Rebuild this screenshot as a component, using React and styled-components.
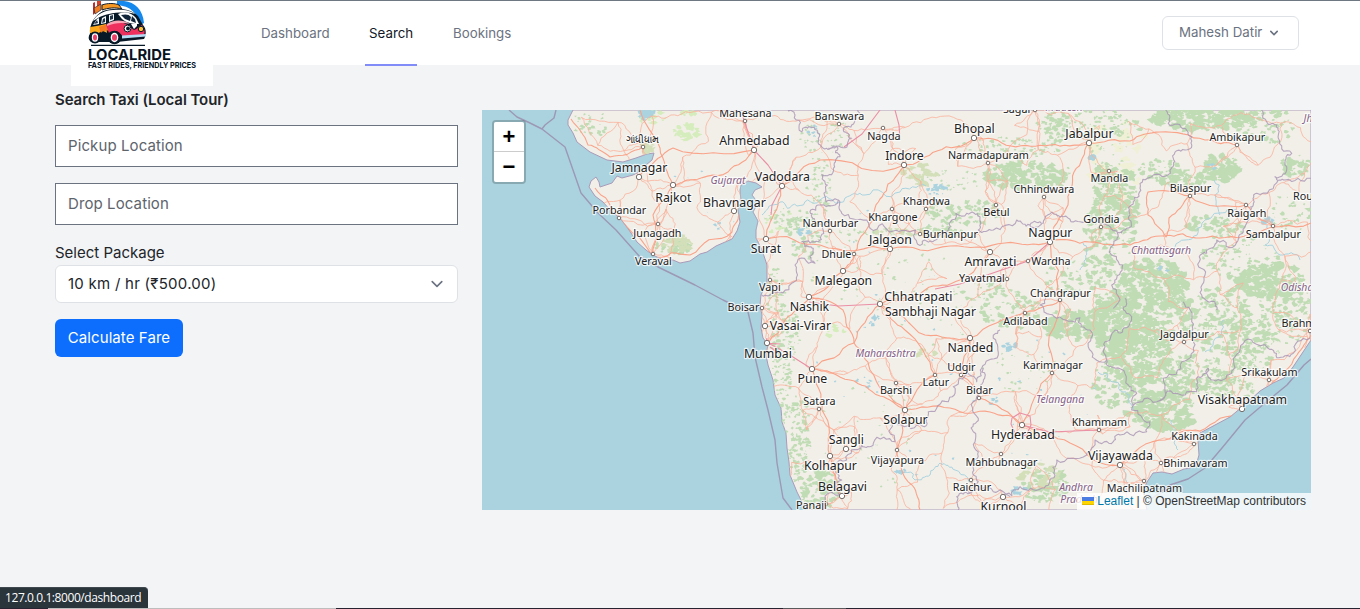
import React from 'react';
import styled, { createGlobalStyle } from 'styled-components';

const Global = createGlobalStyle`
  * { box-sizing: border-box; }
  html, body { margin: 0; height: 100%; overflow: hidden; }
  body { background: #f3f4f6; font-family: Inter, "Liberation Sans", sans-serif; color: #212529; }
`;

const Page = styled.div`
  height: 609px;
  overflow: hidden;
  background: #f3f4f6;
  border-top: 1px solid #6e7883;
`;
const Header = styled.header`
  height: 65px;
  border-bottom: 1px solid #f3f4f6;
  background: #fff;
  display: flex;
  align-items: flex-start;
  padding: 0 61px 0 71px;
`;
const LogoLink = styled.a`
  width: 142px;
  height: 85px;
  flex: none;
  background: #fff;
  svg { display: block; }
`;
const Nav = styled.nav`
  display: flex;
  gap: 32px;
  margin-left: 44px;
  height: 65px;
`;
const NavItem = styled.a`
  height: 65px;
  padding: 0 4px;
  display: flex;
  align-items: center;
  width: ${p => p.$w}px;
  font-size: 13.3px;
  font-weight: 400;
  letter-spacing: ${p => p.$ls || 0}px;
  white-space: nowrap;
  color: ${p => (p.$active ? '#111827' : '#6b7280')};
  border-bottom: 2px solid ${p => (p.$active ? '#818cf8' : 'transparent')};
`;
const UserButton = styled.button`
  margin: 15px 0 0 auto;
  width: 137px;
  height: 34px;
  padding: 0 0 2px 16px;
  display: flex;
  align-items: center;
  gap: 4px;
  border: 1px solid #dee2e6;
  border-radius: 6px;
  background: #fff;
  color: #6b7280;
  font: 400 13.3px Inter, sans-serif;
  white-space: nowrap;
  svg { margin-top: 2px; }
`;
const Main = styled.main`
  display: flex;
  gap: 24px;
  padding: 0 49px 0 55px;
`;
const Form = styled.form`
  width: 403px;
  padding-top: 22px;
  display: flex;
  flex-direction: column;
  align-items: stretch;
`;
const Title = styled.h1`
  margin: 0 0 13px;
  font-size: 15px;
  line-height: 24px;
  font-weight: 600;
  letter-spacing: -0.08px;
`;
const Field = styled.input`
  height: 42px;
  margin: 0 0 16px;
  padding: 0 12px 2px;
  border: 1px solid #6b7280;
  border-radius: 0;
  background: #fff;
  font: 400 15px Inter, sans-serif;
  letter-spacing: 0.1px;
  &::placeholder { color: #5d646c; opacity: 1; }
`;
const Label = styled.label`
  font-size: 15px;
  line-height: 24px;
`;
const Select = styled.div`
  height: 38px;
  padding: 0 12px 2px;
  display: flex;
  align-items: center;
  justify-content: space-between;
  border: 1px solid #dee2e6;
  border-radius: 6px;
  background: #fff;
  font-size: 15px;
  letter-spacing: 0.26px;
  svg { margin-top: 2px; }
`;
const Submit = styled.button`
  margin-top: 16px;
  width: 128px;
  height: 38px;
  padding: 0 0 2px;
  border: 0;
  border-radius: 6px;
  background: #0d6efd;
  color: #fff;
  font: 400 15px Inter, sans-serif;
  letter-spacing: 0.08px;
  white-space: nowrap;
`;
const MapPane = styled.section`
  position: relative;
  width: 829px;
  height: 400px;
  margin-top: 44px;
  overflow: hidden;
  background: #aad3df;
  svg { display: block; }
`;
const Zoom = styled.div`
  position: absolute;
  left: 10px;
  top: 10px;
  width: 34px;
  border: 2px solid rgba(0, 0, 0, 0.2);
  border-radius: 4px;
  background-clip: padding-box;
`;
const ZoomButton = styled.button`
  display: block;
  width: 30px;
  height: 30px;
  padding: 0;
  border: 0;
  border-bottom: ${p => (p.$top ? '1px solid #ccc' : '0')};
  border-radius: ${p => (p.$top ? '2px 2px 0 0' : '0 0 2px 2px')};
  background: #fff;
  color: #000;
  font: bold 22px/30px "Liberation Sans", sans-serif;
`;
const Attribution = styled.div`
  position: absolute;
  right: 0;
  bottom: 0;
  height: 17px;
  padding: 0 5px 2px;
  display: flex;
  align-items: center;
  background: rgba(255, 255, 255, 0.8);
  color: #333;
  font: 12px "Liberation Sans", sans-serif;
  white-space: pre;
  a { color: #0078a8; }
  svg { margin: 1px 3px 0 0; }
`;
const Status = styled.div`
  position: fixed;
  left: 0;
  bottom: 1px;
  width: 148px;
  height: 21px;
  padding-left: 5px;
  border-radius: 0 4px 0 0;
  border-top: 1px solid #3f484f;
  background: #2a343b;
  color: #fff;
  font: 12px/20px "Open Sans", sans-serif;
  letter-spacing: -0.42px;
  white-space: nowrap;
`;
const Edge = styled.div`
  position: fixed;
  left: 0;
  right: 0;
  bottom: 0;
  height: 1px;
  background: linear-gradient(90deg, #272330 48px, #bdbdbd 48px 336px, #272330 336px 783px, #59595c 783px 846px, #272330 846px);
`;

/* ---------- map data: [name, label x, label baseline, dot x, dot y, size] ---------- */
const B = 12.3, S = 10.75;
const cities = [
  ['Mahesana', 745, 117, 745, 121, S], ['Ahmedabad', 754, 145, 754, 150, B], ['ગાંધીધામ', 642, 143, 643, 147, 10],
  ['Jamnagar', 639, 172, 639, 177, B], ['Rajkot', 673, 202, 673, 185, B], ['Bhavnagar', 734, 207, 734, 211, B],
  ['Porbandar', 619, 214, 619, 218, S], ['Junagadh', 657, 237, 658, 224, S], ['Veraval', 653, 265, 653, 254, S],
  ['Vadodara', 782, 181, 782, 186, B], ['Surat', 765.5, 253, 766, 239, B], ['Vapi', 769.5, 291, 770, 280, S],
  ['Boisar', 743, 311, 762, 308, S], ['Nashik', 809, 311, 809, 297, B], ['Vasai-Virar', 800, 330, 765, 326, B],
  ['Mumbai', 767.5, 358, 767, 343, B], ['Pune', 812, 383, 812, 369, B], ['Satara', 819, 405, 819, 409, S],
  ['Sangli', 846, 444, 846, 449, B], ['Kolhapur', 830, 470, 830, 456, B], ['Belagavi', 842, 491, 842, 496, B],
  ['Panaji', 811, 509, 826, 504, S], ['Banswara', 839, 120, 839, 124, S], ['Nagda', 883.5, 140, 883, 128, S],
  ['Indore', 904, 160, 904, 165, B], ['Bhopal', 974, 133, 974, 138, B], ['Narmadapuram', 988, 159, 988, 163, S],
  ['Khandwa', 926, 205, 926, 209, S], ['Khargone', 892.5, 221, 892, 209, S], ['Betul', 996, 216, 996, 205, S],
  ['Nandurbar', 830, 227, 830, 231, S], ['Dhule', 836, 258, 854, 254, S], ['Jalgaon', 890, 244, 890, 249, B],
  ['Burhanpur', 950, 238, 920, 234, S], ['Malegaon', 843, 285, 843, 271, B], ['Amravati', 990, 266, 990, 252, B],
  ['Yavatmal', 981.5, 282, 1007, 279, S], ['Wardha', 1050.5, 265, 1028, 261, S], ['Chhatrapati', 918, 301, 880, 304, B],
  ['Sambhaji Nagar', 930, 316, null, null, 12.1], ['Nagpur', 1050, 237, 1050, 242, B], ['Chhindwara', 1043.5, 193, 1044, 197, S],
  ['Jabalpur', 1089, 138, 1089, 143, B], ['Mandla', 1109, 182, 1109, 171, S], ['Gondia', 1101, 223, 1101, 227, S],
  ['Bilaspur', 1190, 192, 1190, 196, S], ['Ambikapur', 1237, 141, 1237, 145, S], ['Raigarh', 1246.5, 217, 1246, 205, S],
  ['Sambalpur', 1273, 238, 1273, 226, S], ['Rou', 1302.500, 200, null, null, S], ['Chandrapur', 1060, 297, 1060, 300, S],
  ['Adilabad', 1025, 325, 1025, 313, S], ['Jagdalpur', 1184, 338, 1184, 342, S], ['Brahm', 1298, 327, 1310, 331, S],
  ['Karimnagar', 1052.5, 369, 1052, 373, S], ['Srikakulam', 1269, 376, 1269, 380, S], ['Visakhapatnam', 1242, 404, 1242, 409, B],
  ['Khammam', 1099, 426, 1099, 430, S], ['Kakinada', 1194, 440, 1194, 444, S], ['Hyderabad', 1022.5, 439, 1022, 425, B],
  ['Vijayawada', 1120, 460, 1120, 465, B], ['Bhimavaram', 1195, 467, 1161, 463, S], ['Machilipatnam', 1144, 492, 1144, 481, S],
  ['Mahbubnagar', 1001, 466, 1001, 454, S], ['Raichur', 971.5, 491, 971, 480, S], ['Kurnool', 1003, 511, 1003, 497, B],
  ['Nanded', 970, 352, 970, 338, B], ['Udgir', 961, 371, 961, 375, S], ['Latur', 935.5, 386, 935, 375, S],
  ['Barshi', 895.5, 394, 896, 383, S], ['Bidar', 979, 394, 979, 398, S], ['Solapur', 905, 424, 905, 410, B],
  ['Vijayapura', 897, 464, 897, 450, S], ['Sagar', 1017, 113, 1035, 110, S],
];
const states = [
  ['Gujarat', 728, 184], ['Chhattisgarh', 1161, 254], ['Maharashtra', 885.5, 357], ['Telangana', 1060, 403],
  ['Andhra', 1076, 491], ['Pradesh', 1079, 503], ['Odisha', 1297, 291], ['Jh', 1308, 122], ['Pradesh', 1064, 111],
];

const LAND = 'M573 110L568 120 568 125 573 133 577 142 590 152 607 160 623 162 636 158 647 154 654 153 652 160 646 165 641 171 633 175 622 178 617 176 612 183 600 187 599 182 596 177 591 181 589 187 595 196 603 202 611 211 620 218 629 230 637 242 646 250 653 255 665 261 673 260 680 263 690 261 700 254 707 252 716 246 732 239 737 231 740 222 738 210 741 202 740 190 741 185 748 181 756 183 762 187 755 190 752 195 758 203 753 212 758 221 756 230 756 238 762 250 767 265 767 282 761 295 760 305 762 315 761 328 763 338 768 345 766 355 768 365 773 380 775 395 781 408 782 422 786 433 787 448 789 462 790 475 797 492 806 510H1147L1143 492 1147 482 1153 473 1162 472 1172 474 1184 469 1190 468 1197 462 1199 455 1198 440 1200 433 1215 425 1230 417 1248 402 1260 391 1273 383 1284 378 1293 367 1303 352 1311 340V110Z';
/* the narrow gulf between the two peninsulas */
const GULF = 'M740 186L745 184 751 185 755 188 762 187 755 190 752 195 758 203 753 212 758 221 756 230 756 238 762 250H735L738 228 741 220 738 210 741 202Z';

const outline = (ox, oy, pts) => 'M' + pts.map(([x, y]) => `${(ox + x / 3).toFixed(1)} ${(oy + y / 3).toFixed(1)}`).join('L');
const borders = [
  outline(750, 105, [[110, 12], [135, 30], [155, 80], [180, 65], [205, 100], [230, 130], [260, 125], [270, 155], [250, 190], [215, 208], [232, 240], [228, 290], [265, 285], [275, 325], [350, 345], [360, 370], [430, 378], [497, 375], [503, 418], [548, 410], [590, 380], [600, 352], [650, 325], [690, 335], [685, 375], [730, 375], [800, 345], [840, 360], [875, 358]]),
  outline(750, 105, [[330, 0], [315, 45], [280, 75], [305, 100], [285, 128], [235, 130]]),
  outline(750, 105, [[265, 285], [205, 300], [180, 320], [195, 350], [220, 375], [205, 410], [155, 410], [165, 425], [190, 430], [195, 475], [135, 480], [125, 535], [60, 570], [35, 570]]),
  outline(1030, 105, [[0, 360], [40, 355], [80, 328], [100, 335], [150, 350], [210, 355], [240, 365], [262, 385], [285, 375], [300, 330], [310, 290], [330, 250], [365, 215], [420, 195], [430, 160], [465, 135], [485, 95], [465, 70], [415, 55], [405, 10]]),
  outline(1030, 105, [[262, 385], [250, 420], [265, 470], [260, 520], [245, 540], [250, 610]]),
  outline(1030, 105, [[690, 10], [700, 40], [740, 60], [745, 100], [785, 145], [770, 185], [735, 215], [765, 225], [843, 220]]),
  outline(1030, 105, [[745, 225], [680, 265], [670, 300], [655, 330], [640, 380], [620, 412], [560, 405], [530, 445], [508, 455], [525, 510], [515, 570], [555, 590], [560, 615]]),
  outline(1000, 305, [[140, -45], [120, 0], [170, 40], [240, 38], [270, 75], [275, 140], [320, 165], [345, 190], [385, 240], [410, 265], [395, 315], [450, 350], [440, 380], [360, 390], [340, 410], [285, 405], [260, 450], [170, 465], [165, 510], [125, 550], [60, 545], [0, 580]]),
  outline(1000, 305, [[320, 165], [315, 110], [345, 75], [385, 65], [395, 35], [370, 10], [375, -20]]),
  outline(1000, 305, [[550, -10], [575, 50], [580, 110], [545, 170], [490, 220], [470, 290], [400, 300]]),
  outline(1000, 305, [[470, 290], [530, 265], [590, 260], [595, 215], [625, 190], [640, 225], [695, 205], [705, 155], [755, 105], [800, 125], [830, 158], [880, 145], [930, 100]]),
  outline(700, 305, [[900, 75], [880, 90], [895, 150], [845, 190], [830, 230], [805, 205], [760, 245], [745, 290], [685, 320], [680, 360], [650, 360], [580, 345], [585, 410], [520, 415], [485, 420], [440, 465], [400, 490], [425, 525], [420, 570], [350, 610]]),
  outline(700, 305, [[850, 190], [850, 230], [830, 275], [835, 340], [820, 380], [835, 440], [820, 490], [835, 530], [810, 565], [770, 575], [775, 615]]),
  outline(700, 305, [[810, 565], [880, 560], [930, 575]]),
];
const seaLines = [
  'M509 110L517 117 530 123 542 129 565 147 573 170 581 193 598 213 616 230 640 257 658 267 695 285 723 300 748 312 753 333 755 357 762 387 768 410 775 440 777 463 783 498 792 510',
  'M542 129L545 125 554 118 556 110',
  'M1311 359L1304 365 1287 385 1265 403 1245 420 1222 448 1205 468 1188 479 1170 485 1150 500',
];

/* ---------- procedural terrain ---------- */
function rng(seed) {
  let s = seed;
  return () => {
    s = (s * 1664525 + 1013904223) >>> 0;
    return s / 4294967296;
  };
}
/* forest clusters: centre x, centre y, radius x, radius y, patch count, patch size */
const forests = [
  [1030, 175, 42, 13, 70, 5], [965, 212, 38, 11, 40, 4], [940, 232, 20, 6, 18, 4], [1010, 148, 48, 10, 40, 2.5],
  [1090, 125, 50, 14, 45, 3], [1055, 125, 10, 20, 25, 3], [1108, 195, 14, 32, 75, 4], [1128, 210, 9, 40, 45, 4],
  [1100, 250, 15, 45, 60, 4], [1200, 118, 45, 12, 85, 5], [1265, 125, 28, 18, 45, 3.5], [1222, 168, 16, 12, 50, 5],
  [1180, 178, 28, 8, 40, 4], [1160, 168, 20, 8, 20, 3], [1215, 225, 26, 8, 28, 4], [1295, 165, 14, 10, 22, 4],
  [1290, 215, 20, 20, 25, 2.5], [1270, 280, 30, 16, 80, 5], [1240, 255, 36, 22, 45, 3], [1150, 285, 34, 24, 110, 5],
  [1115, 325, 20, 32, 130, 5], [1140, 350, 28, 32, 130, 5], [1170, 315, 26, 25, 65, 4], [1195, 375, 38, 18, 90, 4],
  [1165, 410, 28, 20, 90, 5], [1110, 385, 16, 22, 35, 4], [1075, 325, 30, 14, 60, 5], [1135, 400, 12, 20, 24, 4],
  [1220, 320, 30, 32, 90, 3.5], [1250, 345, 28, 24, 75, 3.5], [1285, 310, 26, 32, 65, 3.5], [1230, 390, 26, 12, 40, 3],
  [780, 390, 11, 45, 65, 2.5], [800, 440, 10, 45, 55, 3], [820, 490, 18, 18, 45, 4], [785, 335, 14, 28, 45, 2.5],
  [775, 295, 9, 25, 25, 2.5], [803, 238, 16, 22, 32, 3], [790, 218, 24, 10, 30, 2], [825, 135, 24, 18, 26, 2],
  [820, 185, 12, 30, 28, 2.2], [675, 246, 17, 8, 18, 4], [590, 125, 18, 13, 15, 2.5], [1010, 310, 28, 18, 32, 3.5],
  [985, 290, 28, 10, 22, 3], [1020, 370, 35, 20, 18, 2], [1045, 485, 22, 16, 45, 4], [1110, 140, 22, 30, 30, 2],
  [900, 232, 60, 4, 28, 2], [955, 180, 35, 10, 22, 2], [870, 265, 70, 35, 28, 2], [930, 310, 60, 35, 20, 1.8],
  [860, 440, 60, 50, 24, 1.8], [1070, 280, 24, 18, 24, 3],
];
function blob(r, x, y, size) {
  const n = 8;
  let d = '';
  for (let i = 0; i < n; i++) {
    const a = (i / n) * Math.PI * 2;
    const k = size * (0.3 + r() * 0.9);
    d += `${i ? 'L' : 'M'}${(x + Math.cos(a) * k * 1.25).toFixed(1)} ${(y + Math.sin(a) * k * 0.9).toFixed(1)}`;
  }
  return d + 'Z';
}
function scatter(seed, clusters, density = 1, scale = 1) {
  const r = rng(seed);
  let d = '';
  clusters.forEach(([cx, cy, rx, ry, n, size]) => {
    for (let i = 0; i < n * density; i++) {
      const a = r() * Math.PI * 2;
      const q = Math.sqrt(r()) * 1.08;
      d += blob(r, cx + Math.cos(a) * rx * q, cy + Math.sin(a) * ry * q, size * scale * (0.3 + r() * 0.8));
    }
  });
  return d;
}
function wiggle(r, x1, y1, x2, y2, amount) {
  let pts = [[x1, y1], [x2, y2]];
  for (let k = 0; k < 3; k++) {
    const next = [pts[0]];
    for (let i = 1; i < pts.length; i++) {
      const [ax, ay] = pts[i - 1];
      const [bx, by] = pts[i];
      const o = (r() - 0.5) * amount;
      next.push([(ax + bx) / 2 - (by - ay) * o, (ay + by) / 2 + (bx - ax) * o], pts[i]);
    }
    pts = next;
  }
  return pts;
}
const toPath = pts => 'M' + pts.map(p => `${p[0].toFixed(1)} ${p[1].toFixed(1)}`).join('L');

function network() {
  const r = rng(77);
  const nodes = cities.filter(c => c[3] !== null).map(c => [c[3], c[4]]);
  const hubs = nodes.length;
  for (let y = 112; y < 515; y += 26) {
    for (let x = 575; x < 1315; x += 30) nodes.push([x + r() * 24, y + r() * 20]);
  }
  const inSea = (x, y) => (x < 755 && y > 262) || (x < 785 && y > 400) || (x < 640 && y > 240) || (x > 1215 && y > 430) || (x > 741 && x < 756 && y > 185 && y < 240) || (y > 162 && y < 185 && x < 636);
  const done = new Set();
  let d = '';
  nodes.forEach(([x, y], i) => {
    if (inSea(x, y)) return;
    const near = nodes
      .map((p, j) => [j, Math.hypot(p[0] - x, p[1] - y)])
      .filter(([j, dist]) => j !== i && dist > 6 && !inSea(nodes[j][0], nodes[j][1]))
      .sort((a, b) => a[1] - b[1])
      .slice(0, i < hubs ? 5 : 2);
    near.forEach(([j]) => {
      const key = Math.min(i, j) + '-' + Math.max(i, j);
      if (done.has(key)) return;
      done.add(key);
      d += toPath(wiggle(r, x, y, nodes[j][0], nodes[j][1], 0.32));
    });
  });
  return d;
}
function jagged(seed, d, amount = 0.6) {
  const r = rng(seed);
  const pts = d.slice(1).replace(/L/g, ' ').split(' ').map(Number);
  let out = [[pts[0], pts[1]]];
  for (let i = 2; i < pts.length; i += 2) {
    out = out.concat(wiggle(r, pts[i - 2], pts[i - 1], pts[i], pts[i + 1], amount).slice(1));
  }
  return toPath(out);
}
const forestPath = scatter(5, forests, 1.9, 0.88);
const meadowPath = scatter(9, [[686, 132, 11, 8, 35, 4], [652, 118, 13, 8, 12, 4], [780, 222, 14, 12, 10, 3], [835, 331, 9, 6, 8, 3], [690, 113, 10, 2, 10, 3]]);
const scrubPath = scatter(12, [[920, 175, 15, 9, 32, 4], [895, 232, 18, 3, 15, 3], [678, 243, 14, 7, 26, 4], [1040, 475, 18, 11, 32, 4], [648, 147, 6, 4, 10, 4], [925, 353, 10, 4, 12, 3]]);
const paleGreen = scatter(21, [[1120, 155, 28, 38, 28, 7]]);
const clearings = scatter(31, [[1150, 320, 40, 55, 75, 1.5], [1230, 340, 50, 40, 80, 1.8], [1200, 380, 35, 20, 40, 1.5], [1110, 250, 20, 65, 40, 1.4], [1200, 125, 50, 18, 24, 1.3]]);
const waterPath = scatter(14, [
  [937, 190, 10, 5, 16, 3], [1091, 157, 3, 4, 6, 3], [1212, 167, 4, 3, 5, 3], [1267, 220, 6, 3, 12, 3], [874, 320, 6, 6, 7, 3],
  [864, 383, 8, 6, 9, 2], [901, 472, 6, 3, 8, 3], [806, 233, 6, 5, 8, 3], [1009, 347, 7, 4, 9, 3], [814, 131, 5, 8, 9, 2],
  [994, 402, 5, 6, 8, 2], [1020, 490, 7, 4, 8, 3], [719, 226, 4, 3, 5, 2], [1165, 269, 7, 2, 6, 2], [646, 115, 10, 4, 14, 4],
  [880, 260, 100, 55, 14, 1.5], [900, 400, 95, 85, 20, 1.5], [1040, 400, 55, 70, 22, 1.5], [690, 200, 60, 40, 10, 1.2],
]);
const roadPath = network();
const borderPath = borders.map((b, i) => jagged(40 + i, b)).join('');
const rivers = [
  'M762 215L780 202 797 206 820 200 845 198 865 195 900 192 926 186', 'M1170 258L1185 240 1202 223 1220 213 1240 215',
  'M1098 372L1115 382 1130 395 1133 410', 'M1120 465L1126 475 1132 490', 'M1172 420L1172 435 1178 450',
  'M897 470L915 480 930 475 940 463 955 470 975 490', 'M1214 180L1216 205 1220 215', 'M1083 243L1086 258 1080 270',
  'M1267 225L1265 245 1280 255 1300 260', 'M1223 320L1213 345 1205 352',
].map((p, i) => jagged(80 + i, p));
const highways = [
  'M743 117L754 150 768 165 782 186', 'M782 186L772 205 771 215', 'M844 147L862 134 880 110', 'M895 110L899 125 900 140',
  'M809 302L838 306 880 304', 'M935 289L960 284 990 274 1028 261 1050 242', 'M768 343L785 352 812 369', 'M1022 425L1050 432 1099 430',
  'M1012 418L1020 413 1030 416 1031 425 1026 436 1015 433 1011 424Z', 'M763 343L780 344M770 347L778 353M765 349L767 338',
];
const trunk = [
  'M1050 242L1090 242 1130 245 1165 236 1200 238 1250 234 1311 223', 'M1050 242L1068 205 1074 172 1089 143', 'M1089 143L1050 145 1011 146 974 138 937 151 904 165',
  'M904 165L888 184 875 208 865 232 854 254 843 271 809 297 785 320 767 343', 'M812 369L850 380 880 396 905 410 950 408 990 412 1022 425',
  'M812 369L822 410 830 456 842 496', 'M1022 425L1052 373 1060 300 1050 242', 'M1022 425L1070 443 1120 465 1165 440 1200 431 1242 409 1270 386 1297 355 1311 335',
  'M905 410L897 450 912 485 920 510', 'M782 186L820 160 904 165', 'M766 239L820 245 890 249 950 246 1005 243 1050 242', 'M766 239L778 205 782 186',
  'M754 150L673 148 643 170 639 177', 'M754 150L728 172 687 180 673 185 653 215 653 254', 'M673 185L660 148 640 110', 'M571 119L588 145 610 157 643 147',
  'M595 188L619 218 653 258 690 255 732 232 741 211', 'M1089 143L1130 141 1160 132 1205 140 1237 145', 'M1190 196L1169 218 1166 237 1148 215 1148 192 1190 196 1246 205 1273 226',
  'M854 343L812 369', 'M854 343L843 310 809 297', 'M854 343L880 304 905 330 935 375 905 410', 'M854 343L870 370 905 410', 'M880 304L925 335 970 338 961 375 979 398 1022 425',
  'M970 338L1025 313 1060 300', 'M990 252L960 280 925 290 880 304',
].map((p, i) => (p.includes('Z') ? p : jagged(120 + i, p, 0.22)));

function IndiaMap() {
  return (
    <svg width="829" height="400" viewBox="482 110 829 400" fill="none" strokeLinejoin="round">
      <defs>
        <clipPath id="land"><path d={LAND} /></clipPath>
      </defs>
      <path d={LAND} fill="#f2efe9" stroke="#a99bb9" strokeWidth="1" />
      <g clipPath="url(#land)">
        <path d={paleGreen} fill="#eff0d5" />
        <path d={meadowPath} fill="#d5ecbc" />
        <path d={forestPath} fill="#bfdcb4" />
        <path d={clearings} fill="#f0efe4" />
        <path d={scrubPath} fill="#d3dfb9" />
        <path d={waterPath} fill="#aad3df" />
        {rivers.map((d, i) => <path key={i} d={d} stroke="#aad3df" strokeWidth="1" />)}
        <path d={roadPath} stroke="#fab29c" strokeWidth=".85" opacity=".95" />
        {trunk.map((d, i) => <path key={i} d={d} stroke="#f9a389" strokeWidth="1.1" />)}
        {highways.map((d, i) => <path key={i} d={d} stroke="#ea8fa5" strokeWidth="1.1" />)}
        <path d={borderPath} stroke="#a894b3" strokeWidth="1.1" opacity=".8" />
        <path d={GULF} fill="#aad3df" />
      </g>
      {seaLines.map((d, i) => <path key={i} d={d} stroke="#9d98b5" strokeWidth="1.4" />)}
      {cities.map(([name, , , x, y, size]) => x !== null && (
        <circle key={name} cx={x} cy={y} r={size === B ? 2.7 : 1.8} fill="#fff" stroke="#675f5a" strokeWidth=".9" />
      ))}
      <g fontFamily='"Noto Sans", sans-serif' textAnchor="middle" stroke="#fff" strokeOpacity=".75" strokeWidth="2.4" paintOrder="stroke">
        {states.map(([name, x, y], i) => (
          <text key={i} x={x} y={y} fontSize="10.4" fontStyle="italic" fill="#856086">{name}</text>
        ))}
        {cities.map(([name, x, y, , , size]) => (
          <text key={name} x={x + 0.4} y={y} fontSize={size} fill="#222">{name}</text>
        ))}
      </g>
    </svg>
  );
}

function Logo() {
  return (
    <svg width="142" height="85" viewBox="71 1 142 85">
      <path d="M117 1H124C135 2 143 10 144 23L140 25C138 13 130 6 117 5Z" fill="#1689ef" />
      <path d="M93 15V3L95 2V13Z" fill="#b82f32" />
      <path d="M97 12V1H101V10Z" fill="#d5402c" />
      <path d="M94 8L101 4V10L95 14Z" fill="#f27b25" stroke="#14202e" strokeWidth=".6" />
      <path d="M102 5C107 3 115 3 119 5L122 9C115 7 108 8 102 10Z" fill="#f89822" stroke="#14202e" strokeWidth="1" />
      <path d="M90 34C89 24 95 15 103 11C116 7 130 8 138 16L143 25C147 29 146 36 144 39L117 42H92C88 40 88 37 90 34Z" fill="#071827" />
      <path d="M93 21C97 14 105 10 113 10C121 9 131 10 135 14C124 11 106 13 98 18Z" fill="#fff" />
      <path d="M90 27C97 26 102 25 106 24L107 33C103 30 99 31 98 35L90 33Z" fill="#fba91d" />
      <path d="M99 27L108 24 113 32C108 30 103 30 101 33Z" fill="#f27a24" />
      <path d="M106 25C114 21 122 21 129 26L134 30C137 29 140 26 142 25C146 31 145 35 142 36L123 37C119 30 112 30 109 33Z" fill="#ed305d" />
      <path d="M107 24C113 20 122 19 130 24C122 22 114 23 107 26Z" fill="#f8a4b5" />
      <path d="M93 25L97 19 99 18 99 24ZM101 24L102 18 106 16 106 23ZM109 22L109 15 114 14V20Z" fill="#f3f6f8" />
      <path d="M94 24L97 20 98 23ZM102 23L103 19 105 18V22ZM110 20V16L113 15V19Z" fill="#20354a" />
      <path d="M118 14C125 11 132 13 136 18L139 24C133 24 126 23 122 19Z" fill="#fff" />
      <path d="M121 15C125 14 129 14 131 17L130 21 125 19ZM132 16L135 19 136 23 131 21Z" fill="#10253a" />
      <path d="M131 24L137 23 137 26 134 29Z" fill="#fff" />
      <circle cx="127.500" cy="28.500" r="3.400" fill="#fff" stroke="#071827" strokeWidth="1" />
      <circle cx="128" cy="28.500" r="1.900" fill="#071827" />
      <circle cx="141" cy="29" r="2.700" fill="#ffbe35" stroke="#071827" strokeWidth="1" />
      <path d="M122 35.500L146 34V36.500L122 38.500Z" fill="#b6dcf6" />
      <circle cx="95" cy="37.500" r="6" fill="#071827" />
      <circle cx="114.500" cy="37.500" r="6.800" fill="#071827" />
      <ellipse cx="95" cy="37.500" rx="3.200" ry="4.200" fill="#fff" />
      <ellipse cx="114.500" cy="37.500" rx="3.800" ry="4.700" fill="#fff" />
      <ellipse cx="95" cy="37.500" rx="2" ry="3" fill="#ee416a" />
      <ellipse cx="114.500" cy="37.500" rx="2.500" ry="3.200" fill="#ee416a" />
      <path d="M91 45.300H145" stroke="#071827" strokeWidth="1.200" />
      <text x="88" y="59.700" fontFamily="Inter, sans-serif" fontSize="14.700" fontWeight="700" textLength="83" lengthAdjust="spacingAndGlyphs" fill="#07131f">LOCALRIDE</text>
      <text x="88" y="67.900" fontFamily="Inter, sans-serif" fontSize="7.800" fontWeight="700" textLength="108" lengthAdjust="spacingAndGlyphs" fill="#07131f">FAST RIDES, FRIENDLY PRICES</text>
    </svg>
  );
}

export default function App() {
  return (
    <Page>
      <Global />
      <Header>
        <LogoLink><Logo /></LogoLink>
        <Nav>
          <NavItem $w={76}>Dashboard</NavItem>
          <NavItem $active $w={52}>Search</NavItem>
          <NavItem $w={66}>Bookings</NavItem>
        </Nav>
        <UserButton type="button">
          Mahesh Datir
          <svg width="16" height="16" viewBox="0 0 20 20" fill="#6b7280">
            <path fillRule="evenodd" clipRule="evenodd" d="M5.293 7.293a1 1 0 011.414 0L10 10.586l3.293-3.293a1 1 0 111.414 1.414l-4 4a1 1 0 01-1.414 0l-4-4a1 1 0 010-1.414z" />
          </svg>
        </UserButton>
      </Header>
      <Main>
        <Form>
          <Title>Search Taxi (Local Tour)</Title>
          <Field placeholder="Pickup Location" />
          <Field placeholder="Drop Location" />
          <Label>Select Package</Label>
          <Select>
            10 km / hr (₹500.00)
            <svg width="16" height="16" viewBox="0 0 20 20" fill="none" stroke="#6b7280" strokeWidth="2">
              <path strokeLinecap="round" strokeLinejoin="round" d="M4 7l6 6 6-6" />
            </svg>
          </Select>
          <Submit type="button">Calculate Fare</Submit>
        </Form>
        <MapPane>
          <IndiaMap />
          <Zoom>
            <ZoomButton $top>+</ZoomButton>
            <ZoomButton>−</ZoomButton>
          </Zoom>
          <Attribution>
            <svg width="12" height="8" viewBox="0 0 12 8">
              <path fill="#4c7be1" d="M0 0h12v4H0z" />
              <path fill="#ffd500" d="M0 4h12v3H0z" />
              <path fill="#e0bc00" d="M0 7h12v1H0z" />
            </svg>
            <a>Leaflet</a> | © OpenStreetMap contributors
          </Attribution>
        </MapPane>
      </Main>
      <Edge />
      <Status>127.0.0.1:8000/dashboard</Status>
    </Page>
  );
}
